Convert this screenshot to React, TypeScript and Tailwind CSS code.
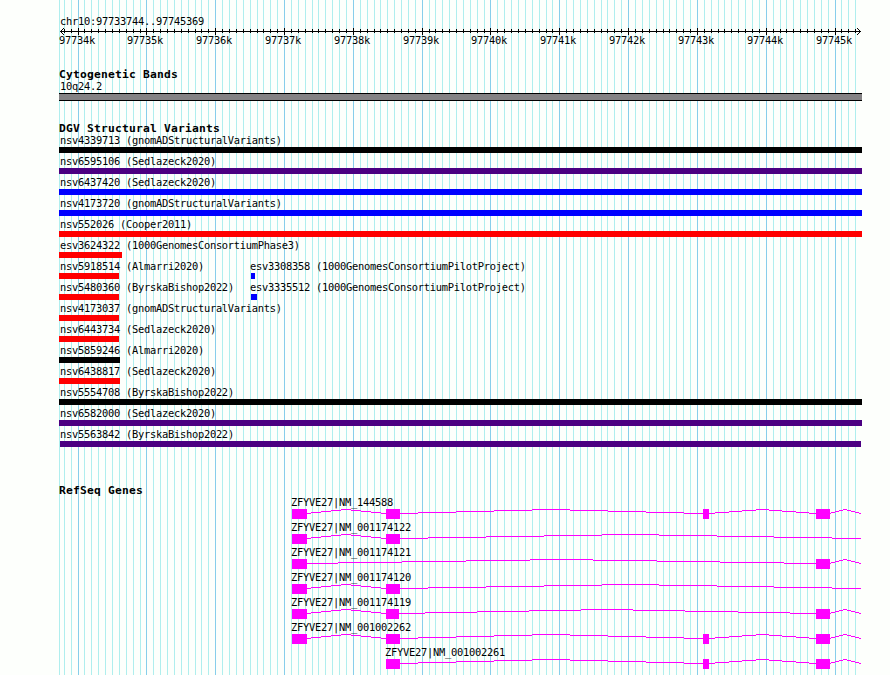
const MAJOR_TICKS = [78, 146, 215, 284, 353, 422, 490, 559, 628, 697, 766, 835]

// 0.1k steps, starting two steps before 97734k
const MINOR_TICKS = Array.from({ length: 116 }, (_, i) => Math.round(77.58 + (i - 2) * 6.882)).filter(
  (x) => x < 860 && !MAJOR_TICKS.some((m) => Math.abs(m - x) < 2)
)

interface Variant {
  name: string
  source: string
  color: string
  bar: string
}

interface VariantRow extends Variant {
  extra?: Variant
}

const FULL = "w-[803px]"

const VARIANTS: VariantRow[] = [
  { name: "nsv4339713", source: "gnomADStructuralVariants", color: "bg-black", bar: FULL },
  { name: "nsv6595106", source: "Sedlazeck2020", color: "bg-[#4b0082]", bar: FULL },
  { name: "nsv6437420", source: "Sedlazeck2020", color: "bg-[#0000ff]", bar: FULL },
  { name: "nsv4173720", source: "gnomADStructuralVariants", color: "bg-[#0000ff]", bar: FULL },
  { name: "nsv552026", source: "Cooper2011", color: "bg-[#ff0000]", bar: FULL },
  { name: "esv3624322", source: "1000GenomesConsortiumPhase3", color: "bg-[#ff0000]", bar: "w-[63px]" },
  {
    name: "nsv5918514",
    source: "Almarri2020",
    color: "bg-[#ff0000]",
    bar: "w-[60px]",
    extra: { name: "esv3308358", source: "1000GenomesConsortiumPilotProject", color: "bg-[#0000ff]", bar: "ml-0.5 w-1" },
  },
  {
    name: "nsv5480360",
    source: "ByrskaBishop2022",
    color: "bg-[#ff0000]",
    bar: "w-[60px]",
    extra: { name: "esv3335512", source: "1000GenomesConsortiumPilotProject", color: "bg-[#0000ff]", bar: "ml-0.5 w-1.5" },
  },
  { name: "nsv4173037", source: "gnomADStructuralVariants", color: "bg-[#ff0000]", bar: "w-[60px]" },
  { name: "nsv6443734", source: "Sedlazeck2020", color: "bg-[#ff0000]", bar: "w-[60px]" },
  { name: "nsv5859246", source: "Almarri2020", color: "bg-black", bar: "w-[61px]" },
  { name: "nsv6438817", source: "Sedlazeck2020", color: "bg-[#ff0000]", bar: "w-[61px]" },
  { name: "nsv5554708", source: "ByrskaBishop2022", color: "bg-black", bar: FULL },
  { name: "nsv6582000", source: "Sedlazeck2020", color: "bg-[#4b0082]", bar: FULL },
  { name: "nsv5563842", source: "ByrskaBishop2022", color: "bg-[#4b0082]", bar: "ml-px w-[801px]" },
]

interface Gene {
  name: string
  exons: [number, number][]
}

const GENES: Gene[] = [
  { name: "NM_144588", exons: [[292, 307], [386, 400], [703, 709], [816, 830]] },
  { name: "NM_001174122", exons: [[292, 307], [386, 400]] },
  { name: "NM_001174121", exons: [[292, 307], [816, 830]] },
  { name: "NM_001174120", exons: [[292, 307], [386, 400]] },
  { name: "NM_001174119", exons: [[292, 307], [386, 399], [816, 830]] },
  { name: "NM_001002262", exons: [[292, 307], [386, 400], [703, 709], [816, 830]] },
  { name: "NM_001002261", exons: [[386, 400], [703, 709], [816, 830]] },
]

const TRACK_END = 861

// Hat-shaped intron, rising 4px in whole pixel steps and back down
function intronPath(start: number, end: number) {
  const from = start - 1
  const step = (end - from) / 8
  const heights = [4, 3, 2, 1, 0, 1, 2, 3, 4]
  let x = start
  return heights
    .map((h, i) => {
      const edge = from + step * (i + 0.5)
      const next = i === 8 ? end : i < 4 ? Math.ceil(edge) : Math.round(edge)
      const d = `M${x} ${h + 0.5}H${next}`
      x = next
      return d
    })
    .join("")
}

function Grid() {
  return (
    <svg className="absolute inset-0" width={890} height={675} shapeRendering="crispEdges">
      <rect x={59} y={0} width={1} height={675} fill="#afeeee" />
      {MINOR_TICKS.map((x) => (
        <rect key={x} x={x} y={0} width={1} height={675} fill="#afeeee" />
      ))}
      {MAJOR_TICKS.map((x) => (
        <rect key={x} x={x} y={0} width={1} height={675} fill="#87ceeb" />
      ))}
    </svg>
  )
}

function Ruler() {
  return (
    <div>
      <svg className="block" width={890} height={7} viewBox="0 28 890 7" shapeRendering="crispEdges">
        <rect x={60} y={31} width={801} height={1} />
        {MINOR_TICKS.map((x) => (
          <rect key={x} x={x} y={29} width={1} height={4} />
        ))}
        {MAJOR_TICKS.map((x) => (
          <rect key={x} x={x} y={28} width={1} height={7} />
        ))}
        {[1, 2, 3].map((d) => (
          <g key={d}>
            <rect x={60 + d} y={31 - d} width={1} height={1} />
            <rect x={60 + d} y={31 + d} width={1} height={1} />
            <rect x={860 - d} y={31 - d} width={1} height={1} />
            <rect x={860 - d} y={31 + d} width={1} height={1} />
          </g>
        ))}
      </svg>
      <div className="relative h-[11px]">
        {MAJOR_TICKS.map((x, i) => (
          <span key={x} className="absolute top-0 leading-[10px]" style={{ left: x - 19 }}>
            {97734 + i}k
          </span>
        ))}
      </div>
    </div>
  )
}

function Heading({ children }: { children: string }) {
  return (
    <h2 className="ml-[59px] h-3 pt-px font-bold text-[11.3px] leading-3 tracking-[0.197px]">{children}</h2>
  )
}

function VariantItem({ name, source, color, bar }: Variant) {
  return (
    <div>
      <div className="h-[13px] pl-px leading-[13px]">
        {name} ({source})
      </div>
      <div className={`h-1.5 ${color} ${bar}`} />
    </div>
  )
}

function GeneTrack({ name, exons }: Gene) {
  return (
    <div className="h-[25px]">
      <div className="h-[13px] leading-[13px]" style={{ paddingLeft: exons[0][0] - 1 }}>
        ZFYVE27|{name}
      </div>
      <svg className="block" width={890} height={10} shapeRendering="crispEdges">
        {exons.map(([start, end], i) => (
          <g key={start}>
            <path d={intronPath(end, exons[i + 1]?.[0] ?? TRACK_END)} stroke="#ff00ff" fill="none" />
            <rect x={start} y={0} width={end - start} height={10} fill="#ff00ff" />
          </g>
        ))}
      </svg>
    </div>
  )
}

export default function App() {
  return (
    <div className="relative h-[675px] w-[890px] overflow-hidden bg-[#fdfffc] font-['DejaVu_Sans_Mono',monospace] text-[10.4px] tracking-[-0.261px] whitespace-nowrap text-black">
      <Grid />
      <div className="relative">
        <div className="h-7 pt-[15px] pl-[60px] leading-[13px]">chr10:97733744..97745369</div>
        <Ruler />

        <section className="mt-[22px]">
          <Heading>Cytogenetic Bands</Heading>
          <div className="h-[13px] pl-[60px] leading-[13px]">10q24.2</div>
          <div className="ml-[59px] h-2 w-[803px] border-y border-black bg-[#848284]" />
        </section>

        <section className="mt-[21px]">
          <Heading>DGV Structural Variants</Heading>
          <div className="ml-[59px]">
            {VARIANTS.map(({ extra, ...variant }) => (
              <div key={variant.name} className="grid h-[21px] grid-cols-[190px_1fr]">
                <VariantItem {...variant} />
                {extra && <VariantItem {...extra} />}
              </div>
            ))}
          </div>
        </section>

        <section className="mt-[35px]">
          <Heading>RefSeq Genes</Heading>
          {GENES.map((gene) => (
            <GeneTrack key={gene.name} {...gene} />
          ))}
        </section>
      </div>
    </div>
  )
}
